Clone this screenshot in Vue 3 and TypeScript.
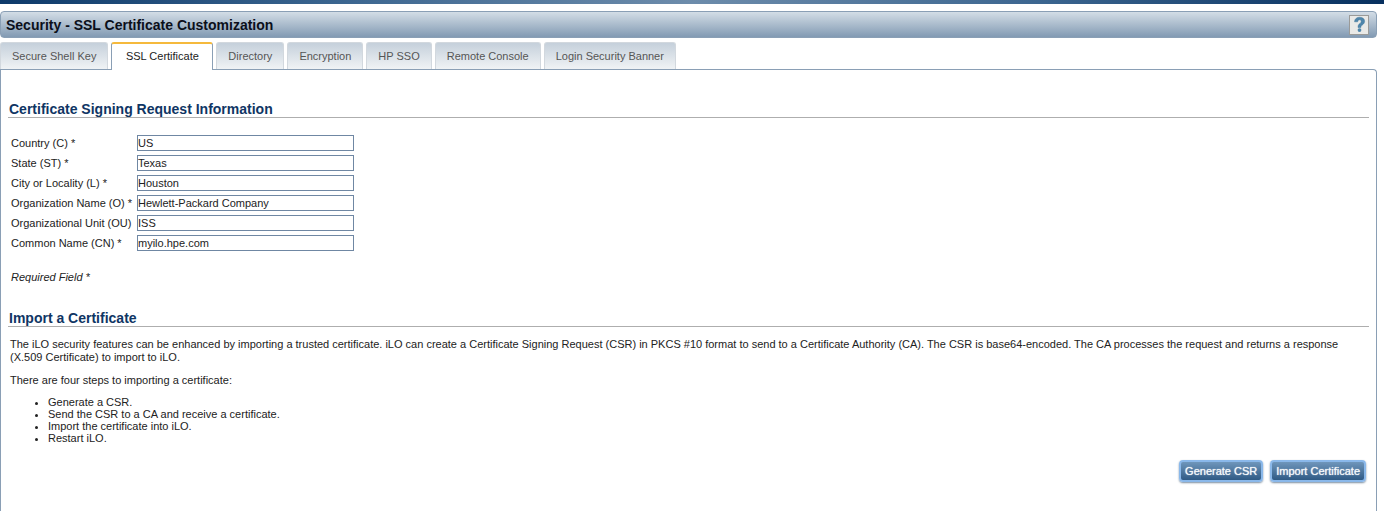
<script setup lang="ts">
const tabs = ['Secure Shell Key', 'SSL Certificate', 'Directory', 'Encryption', 'HP SSO', 'Remote Console', 'Login Security Banner']
const fields = [
  ['Country (C) *', 'US'],
  ['State (ST) *', 'Texas'],
  ['City or Locality (L) *', 'Houston'],
  ['Organization Name (O) *', 'Hewlett-Packard Company'],
  ['Organizational Unit (OU)', 'ISS'],
  ['Common Name (CN) *', 'myilo.hpe.com'],
]
const steps = ['Generate a CSR.', 'Send the CSR to a CA and receive a certificate.', 'Import the certificate into iLO.', 'Restart iLO.']
</script>

<template>
  <div class="page">
    <div class="topbar"></div>
    <div class="titlebar">
      <h1>Security - SSL Certificate Customization</h1>
      <div class="help">
        <svg width="17" height="17" viewBox="0 0 17 17">
          <path d="M3.500 5.800C3.700 2.800 5.700 1.200 8.600 1.200c3 0 5 1.600 5 4 0 1.900-1.100 2.900-2.300 3.800-1.100.8-1.400 1.300-1.400 2.500H7c0-2 .5-3 1.700-3.900 1-.8 1.500-1.300 1.500-2.200 0-1-.6-1.600-1.600-1.600-1.100 0-1.800.7-1.900 2z" fill="#4f86ab" stroke="#2f6a92" stroke-width=".4" />
          <circle cx="8.500" cy="14.100" r="1.900" fill="#4f86ab" />
        </svg>
      </div>
    </div>
    <div class="tabs">
      <div v-for="(t, i) in tabs" :key="t" class="tab" :class="{ active: i === 1 }">{{ t }}</div>
    </div>
    <div class="panel">
      <h2 class="first">Certificate Signing Request Information</h2>
      <div class="form">
        <div v-for="f in fields" :key="f[0]" class="row">
          <label>{{ f[0] }}</label>
          <input :value="f[1]" type="text" />
        </div>
      </div>
      <p class="req">Required Field *</p>
      <h2 class="second">Import a Certificate</h2>
      <p class="intro">The iLO security features can be enhanced by importing a trusted certificate. iLO can create a Certificate Signing Request (CSR) in PKCS #10 format to send to a Certificate Authority (CA). The CSR is base64-encoded. The CA processes the request and returns a response (X.509 Certificate) to import to iLO.</p>
      <p class="four">There are four steps to importing a certificate:</p>
      <ul>
        <li v-for="s in steps" :key="s">{{ s }}</li>
      </ul>
      <div class="actions">
        <button type="button">Generate CSR</button>
        <button type="button">Import Certificate</button>
      </div>
    </div>
  </div>
</template>

<style>
html, body { margin: 0; background: #fff; overflow: hidden; }
</style>

<style scoped>
.page {
  width: 1384px;
  height: 511px;
  overflow: hidden;
  font-family: "Liberation Sans", Arial, sans-serif;
  font-size: 11px;
  color: #222;
  box-sizing: border-box;
}
.topbar {
  height: 4px;
  background: linear-gradient(90deg, #0e3a6a 0%, #3c6690 25%, #6d8cab 50%, #3c6690 75%, #07305f 100%);
}
.titlebar {
  margin: 7px 7px 0 0;
  height: 27px;
  border: 1px solid #8a9fb5;
  border-radius: 4px;
  background: linear-gradient(180deg, #d3dde6 0%, #829ab3 100%);
  display: flex;
  align-items: center;
  justify-content: space-between;
  padding: 0 7px 0 5px;
  box-sizing: border-box;
}
h1 {
  margin: 0;
  font-size: 14px;
  font-weight: bold;
  color: #0b0f1a;
}
.help {
  width: 20px;
  height: 20px;
  box-sizing: border-box;
  background: #e9e9e7;
  border: 1px solid #9a9a98;
  display: flex;
  align-items: center;
  justify-content: center;
}
.tabs {
  display: flex;
  margin-top: 4px;
  padding-left: 0;
  height: 27px;
  gap: 3px;
  position: relative;
  z-index: 1;
}
.tab {
  height: 27px;
  box-sizing: border-box;
  padding: 0 11px;
  line-height: 27px;
  border: 1px solid #d2d8de;
  border-bottom: 0;
  border-radius: 3px 3px 0 0;
  background: linear-gradient(180deg, #c5d0db 0%, #f0f3f5 100%);
  color: #555;
  white-space: nowrap;
}
.tab.active {
  height: 28px;
  background: #fff;
  color: #222;
  border: 1px solid #8a9fb5;
  border-top: 2px solid #f5b93c;
  border-bottom: 0;
  padding: 0 13.5px;
  line-height: 25px;
}
.panel {
  margin-right: 7px;
  height: 460px;
  box-sizing: border-box;
  border: 1px solid #8a9fb5;
  border-bottom: 0;
  border-radius: 0 4px 0 0;
  padding: 0 7px;
  background: #fff;
}
h2 {
  margin: 0;
  font-size: 14px;
  line-height: 16px;
  font-weight: bold;
  color: #0f3564;
  padding-left: 1px;
  border-bottom: 1px solid #aeaeae;
}
h2.first { margin-top: 31px; }
.form { margin-top: 17px; display: flex; flex-direction: column; gap: 4px; }
.row { display: flex; align-items: center; height: 16px; }
label { width: 126px; padding-left: 3px; flex: none; }
input {
  width: 217px;
  height: 16px;
  box-sizing: border-box;
  border: 1px solid #6f87a3;
  padding: 0;
  font: 11px "Liberation Sans", Arial, sans-serif;
  color: #222;
  background: #fff;
  outline: none;
}
.req { margin: 20px 0 0 3px; font-style: italic; line-height: 13px; }
h2.second { margin-top: 26px; }
.intro { margin: 11px 0 0 2px; line-height: 13px; width: 1345px; }
.four { margin: 10px 0 0 2px; line-height: 13px; }
ul { margin: 9px 0 0 0; padding: 0 0 0 40px; line-height: 12px; }
.actions { margin-top: 16px; padding-right: 3px; display: flex; justify-content: flex-end; gap: 7px; }
button {
  height: 22px;
  box-sizing: border-box;
  border: 2px solid #8ab8ea;
  border-radius: 4px;
  background: linear-gradient(180deg, #6f96bb 0%, #2f5a85 100%);
  color: #f4f7fa;
  font: 11px "Liberation Sans", Arial, sans-serif;
  text-shadow: 0 0 1px #fff;
  padding: 0 4px;
  box-shadow: 0 1px 2px #7a8da0;
}
</style>
